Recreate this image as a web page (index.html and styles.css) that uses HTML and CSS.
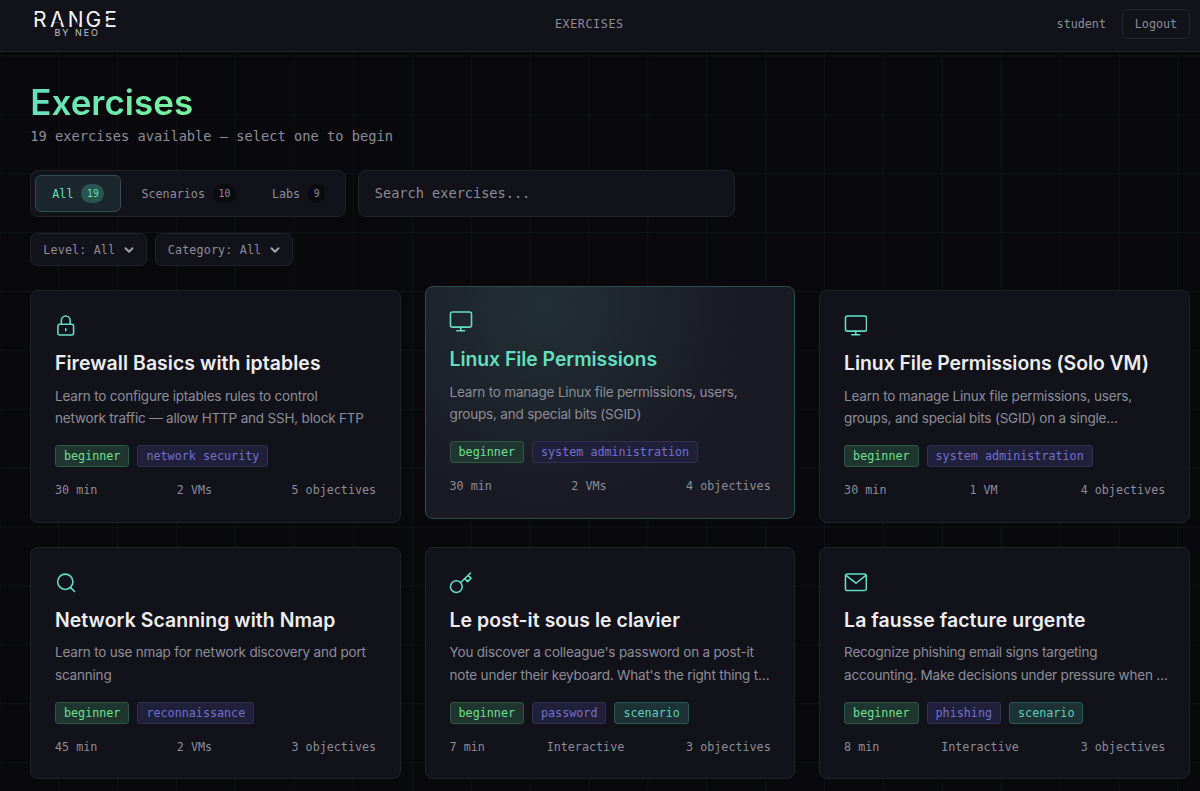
FILE: index.html
```html
<!DOCTYPE html>
<html lang="en">
<head>
<meta charset="utf-8">
<title>Exercises</title>
<link rel="stylesheet" href="styles.css">
</head>
<body>
<header class="topbar">
  <svg class="logo" width="91" height="34" viewBox="0 0 91 34">
    <text class="logo-main" x="2 19 36.800 54.500 73.300" y="19.500">RANGE</text>
    <path class="logo-cut" d="M2.500 9h4M23.500 14.700h6.500M47.300 12.500v8M73.300 8h4M73.300 15.500h4"/>
    <text class="logo-sub" x="23.500" y="29" textLength="43.500" lengthAdjust="spacing">BY NEO</text>
  </svg>
  <nav class="nav">EXERCISES</nav>
  <div class="account"><span>student</span><button class="logout">Logout</button></div>
</header>
<main class="page">
  <h1 class="heading"><span>Exercises</span></h1>
  <p class="subtitle">19 exercises available — select one to begin</p>
  <div class="toolbar">
    <div class="tabs">
      <button class="tab active">All<span class="count">19</span></button>
      <button class="tab">Scenarios<span class="count">10</span></button>
      <button class="tab">Labs<span class="count">9</span></button>
    </div>
    <input class="search" placeholder="Search exercises...">
  </div>
  <div class="filters">
    <button class="filter">Level: All<svg width="10" height="10" viewBox="0 0 10 10"><path d="M1.500 3.200 5 6.700 8.500 3.200"/></svg></button>
    <button class="filter">Category: All<svg width="10" height="10" viewBox="0 0 10 10"><path d="M1.500 3.200 5 6.700 8.500 3.200"/></svg></button>
  </div>
  <section class="grid">
    <article class="card">
      <svg class="icon" viewBox="0 0 24 24"><rect x="4" y="10.500" width="16" height="11" rx="2"/><path d="M7.500 10.500V6.500a4.500 4.500 0 0 1 9 0v4M12 15v2"/></svg>
      <h2>Firewall Basics with iptables</h2>
      <p class="desc">Learn to configure iptables rules to control<br>network traffic — allow HTTP and SSH, block FTP</p>
      <div class="tags"><span class="tag level">beginner</span><span class="tag topic">network security</span></div>
      <div class="meta"><span>30 min</span><span>2 VMs</span><span>5 objectives</span></div>
    </article>
    <article class="card hovered">
      <svg class="icon" viewBox="0 0 24 24"><rect x="1.500" y="2" width="21.500" height="15.500" rx="2"/><path d="M8 21.200h8M12 17.500v3.700"/></svg>
      <h2 class="wide">Linux File Permissions</h2>
      <p class="desc">Learn to manage Linux file permissions, users,<br>groups, and special bits (SGID)</p>
      <div class="tags"><span class="tag level">beginner</span><span class="tag topic">system administration</span></div>
      <div class="meta"><span>30 min</span><span>2 VMs</span><span>4 objectives</span></div>
    </article>
    <article class="card">
      <svg class="icon" viewBox="0 0 24 24"><rect x="1.500" y="2" width="21.500" height="15.500" rx="2"/><path d="M8 21.200h8M12 17.500v3.700"/></svg>
      <h2 class="wide">Linux File Permissions (Solo VM)</h2>
      <p class="desc">Learn to manage Linux file permissions, users,<br>groups, and special bits (SGID) on a single…</p>
      <div class="tags"><span class="tag level">beginner</span><span class="tag topic">system administration</span></div>
      <div class="meta"><span>30 min</span><span>1 VM</span><span>4 objectives</span></div>
    </article>
    <article class="card">
      <svg class="icon" viewBox="0 0 24 24"><circle cx="11.500" cy="11" r="7.800"/><path d="m17 17 4 4"/></svg>
      <h2>Network Scanning with Nmap</h2>
      <p class="desc">Learn to use nmap for network discovery and port<br>scanning</p>
      <div class="tags"><span class="tag level">beginner</span><span class="tag topic">reconnaissance</span></div>
      <div class="meta"><span>45 min</span><span>2 VMs</span><span>3 objectives</span></div>
    </article>
    <article class="card">
      <svg class="icon" viewBox="0 0 24 24"><circle cx="7.500" cy="16" r="6"/><path d="M11.800 11.800 22 2M16 7.800l3 3 3.500-3.500-3-3"/></svg>
      <h2>Le post-it sous le clavier</h2>
      <p class="desc">You discover a colleague's password on a post-it<br>note under their keyboard. What's the right thing t…</p>
      <div class="tags"><span class="tag level">beginner</span><span class="tag topic">password</span><span class="tag scenario">scenario</span></div>
      <div class="meta"><span>7 min</span><span>Interactive</span><span>3 objectives</span></div>
    </article>
    <article class="card">
      <svg class="icon" viewBox="0 0 24 24"><rect x="1.500" y="3" width="21.300" height="17" rx="2"/><path d="m2 4.500 10.200 8L22.300 4.500"/></svg>
      <h2>La fausse facture urgente</h2>
      <p class="desc">Recognize phishing email signs targeting<br>accounting. Make decisions under pressure when …</p>
      <div class="tags"><span class="tag level">beginner</span><span class="tag topic">phishing</span><span class="tag scenario">scenario</span></div>
      <div class="meta"><span>8 min</span><span>Interactive</span><span>3 objectives</span></div>
    </article>
  </section>
</main>
</body>
</html>
```

FILE: styles.css
```css
* { box-sizing: border-box; }
body {
  margin: 0;
  height: 791px;
  overflow: hidden;
  color: #8d8d99;
  font-family: Inter, sans-serif;
  background-color: #09090d;
  background-image:
    linear-gradient(90deg, #0e1215 1px, transparent 1px),
    linear-gradient(#0e1215 1px, transparent 1px);
  background-size: 58.9px 58.9px;
  background-position: -0.500px -3.500px;
}
h1, h2, p { margin: 0; }
button, input { font: inherit; color: inherit; margin: 0; }
.topbar, .subtitle, .toolbar, .filters, .tags, .meta {
  font-family: "DejaVu Sans Mono", monospace;
  font-size: 11.730px;
}
.topbar {
  height: 52px;
  padding: 0 10px 4px 31px;
  display: flex;
  justify-content: space-between;
  align-items: center;
  background: #12121a;
  border-bottom: 1px solid #24242d;
}
.logo-main { font: 400 21px Inter, sans-serif; fill: #f4f4f6; }
.logo-sub { font: 400 9px Inter, sans-serif; fill: #c4c4ca; }
.logo-cut { stroke: #12121a; stroke-width: 2; fill: none; }
.nav { letter-spacing: 0.590px; }
.account { display: flex; align-items: center; gap: 16px; }
.logout {
  width: 68px;
  height: 30px;
  padding: 0;
  background: none;
  border: 1px solid #25252e;
  border-radius: 4px;
}
.page { padding: 29px 10px 0 30.300px; }
.heading { font-size: 35px; font-weight: 600; line-height: 43px; letter-spacing: 0; }
.heading span {
  background: linear-gradient(135deg, #64dfc0, #7bf59a);
  -webkit-background-clip: text;
  background-clip: text;
  color: transparent;
}
.subtitle { margin-top: 1px; font-size: 13.700px; line-height: 23px; }
.toolbar { display: flex; gap: 12px; margin-top: 22px; }
.tabs {
  display: flex;
  gap: 3px;
  width: 315.500px;
  height: 47px;
  padding: 4px;
  background: #12121a;
  border: 1px solid #22222b;
  border-radius: 8px;
}
.tab {
  display: flex;
  align-items: center;
  gap: 8px;
  padding: 0 16px;
  background: none;
  border: 1px solid transparent;
  border-radius: 6px;
}
.tab:last-child { margin-left: -1px; }
.tab.active { color: #64dfc0; background: #1b272c; border-color: #2b504d; }
.count { padding: 0 5.600px; border-radius: 10px; font-size: 9.800px; line-height: 19px; background: #0a0a0f; }
.active .count { background: #2b5650; }
.search {
  width: 377px;
  height: 47px;
  padding: 0 16px 1px;
  font-size: 13.600px;
  background: #12121a;
  border: 1px solid #22222b;
  border-radius: 8px;
}
.search::placeholder { color: #8d8d99; opacity: 1; }
.filters { display: flex; gap: 8px; margin-top: 16px; }
.filter {
  display: flex;
  align-items: center;
  gap: 8.500px;
  height: 33px;
  padding: 0 12px;
  letter-spacing: 0.140px;
  background: #12121a;
  border: 1px solid #22222b;
  border-radius: 7px;
}
.filter svg { fill: none; stroke: #a0a0aa; stroke-width: 2; stroke-linecap: round; stroke-linejoin: round; }
.grid { display: grid; grid-template-columns: repeat(3, minmax(0, 1fr)); gap: 24px; margin-top: 24px; }
.card {
  height: 232.700px;
  padding: 23.200px 23.700px;
  background: #12121a;
  border: 1px solid #22222b;
  border-radius: 8px;
}
.card.hovered {
  transform: translateY(-4px);
  border-color: #2c4f4c;
  background: radial-gradient(circle at 32% 8%, #223034, #1a1a24 60%);
}
.icon {
  display: block;
  width: 23.500px;
  height: 23.500px;
  margin-left: -0.500px;
  fill: none;
  stroke: #64dfc0;
  stroke-width: 1.600;
  stroke-linecap: round;
  stroke-linejoin: round;
}
.card h2 { margin-top: 13.500px; font-size: 19.400px; line-height: 25px; font-weight: 600; letter-spacing: 0.080px; color: #ededf0; white-space: nowrap; }
.card h2.wide { letter-spacing: -0.050px; }
.card.hovered h2 { color: #64dfc0; }
.desc { margin-top: 8.600px; font-size: 13.500px; line-height: 22.700px; letter-spacing: -0.190px; white-space: nowrap; }
.tags { display: flex; gap: 8px; margin-top: 15px; }
.tag { height: 22px; padding: 0 8px; line-height: 20px; border: 1px solid; border-radius: 3px; }
.level { color: #6fe08f; background: #1f3530; border-color: #2d5942; }
.topic { color: #7370cf; background: #20203a; border-color: #31304f; }
.scenario { color: #5fd0b5; background: #1c3235; border-color: #2a5854; }
.meta { display: flex; justify-content: space-between; margin-top: 14.300px; line-height: 18px; }
```
